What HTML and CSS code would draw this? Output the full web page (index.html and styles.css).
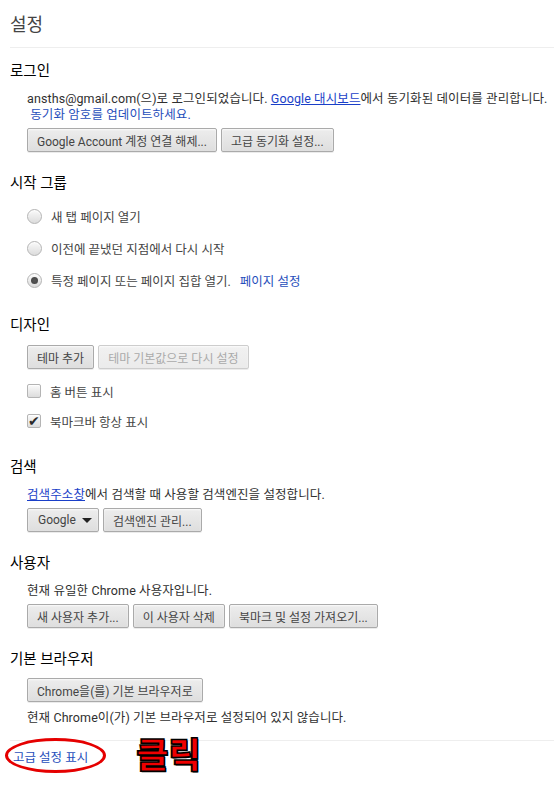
FILE: index.html
```html
<!DOCTYPE html>
<html lang="ko">
<head>
  <meta charset="UTF-8" />
  <title>설정</title>
  <link rel="stylesheet" href="styles.css">
</head>
<body>
  <div class="page">
    <h1 class="page-title">설정</h1>

    <section class="group login">
      <h3>로그인</h3>
      <div class="body">
        <p class="text">ansths@gmail.com(으)로 로그인되었습니다. <a href="#" class="ul">Google 대시보드</a>에서 동기화된 데이터를 관리합니다.<br>
          &nbsp;<a href="#">동기화 암호를 업데이트하세요.</a></p>
        <div class="btns">
          <button>Google Account 계정 연결 해제...</button>
          <button>고급 동기화 설정...</button>
        </div>
      </div>
    </section>

    <section class="group">
      <h3>시작 그룹</h3>
      <div class="body">
        <label class="opt radio-row"><input type="radio" name="start"> 새 탭 페이지 열기</label>
        <label class="opt radio-row"><input type="radio" name="start"> 이전에 끝냈던 지점에서 다시 시작</label>
        <label class="opt radio-row"><input type="radio" name="start" checked> 특정 페이지 또는 페이지 집합 열기. <a href="#">페이지 설정</a></label>
      </div>
    </section>

    <section class="group design">
      <h3>디자인</h3>
      <div class="body">
        <div class="btns top">
          <button>테마 추가</button>
          <button disabled>테마 기본값으로 다시 설정</button>
        </div>
        <label class="opt check-row first"><input type="checkbox"> 홈 버튼 표시</label>
        <label class="opt check-row"><input type="checkbox" checked> 북마크바 항상 표시</label>
      </div>
    </section>

    <section class="group">
      <h3>검색</h3>
      <div class="body">
        <p class="text"><a href="#" class="ul">검색주소창</a>에서 검색할 때 사용할 검색엔진을 설정합니다.</p>
        <div class="btns">
          <button class="select">Google <span class="caret"></span></button>
          <button>검색엔진 관리...</button>
        </div>
      </div>
    </section>

    <section class="group">
      <h3>사용자</h3>
      <div class="body">
        <p class="text">현재 유일한 Chrome 사용자입니다.</p>
        <div class="btns">
          <button>새 사용자 추가...</button>
          <button>이 사용자 삭제</button>
          <button>북마크 및 설정 가져오기...</button>
        </div>
      </div>
    </section>

    <section class="group">
      <h3>기본 브라우저</h3>
      <div class="body">
        <div class="btns first">
          <button>Chrome을(를) 기본 브라우저로</button>
        </div>
        <p class="text note">현재 Chrome이(가) 기본 브라우저로 설정되어 있지 않습니다.</p>
      </div>
    </section>

    <div class="footer">
      <span class="circled"><a href="#">고급 설정 표시</a></span>
      <span class="callout">클릭</span>
    </div>
  </div>
</body>
</html>
```

FILE: styles.css
```css
body {
  margin: 0;
  background: #fff;
  font-family: Roboto, "Noto Sans CJK KR", sans-serif;
  font-size: 12.5px;
  color: #303030;
}
a {
  color: #1f4ebb;
  text-decoration: none;
}
a.ul {
  color: #1a3fc8;
  text-decoration: underline;
}
.page {
  padding: 0 0 0 10px;
}
.page-title {
  margin: 0;
  padding-top: 11px;
  height: 36px;
  font-size: 18px;
  font-weight: normal;
  color: #444;
  line-height: 28px;
  border-bottom: 1px solid #eee;
}
.group {
  margin-top: 22px;
}
.group.login {
  margin-top: 14px;
}
.group h3 {
  margin: 0;
  font-size: 14.5px;
  font-weight: normal;
  color: #000;
  line-height: 20px;
}
.body {
  padding-left: 17px;
}
.text {
  margin: 9px 0 0;
  line-height: 16px;
  letter-spacing: 0.1px;
}
.btns {
  display: flex;
  gap: 4px;
  margin-top: 5px;
}
.btns.top {
  margin-top: 9px;
}
.btns.first {
  margin-top: 8px;
}
button {
  font-family: inherit;
  font-size: 12px;
  color: #444;
  height: 24px;
  padding: 0 9px;
  border: 1px solid #aaa;
  border-radius: 2px;
  background: linear-gradient(#ededed, #dedede);
  box-shadow: 0 1px 0 rgba(0,0,0,0.08), inset 0 1px 2px rgba(255,255,255,0.75);
}
button:disabled {
  color: #aaa;
  border-color: #cdcdcd;
  background: linear-gradient(#f1f1f1, #ebebeb);
}
.select {
  display: flex;
  align-items: center;
  gap: 6px;
  padding: 0 6px 0 10px;
}
.caret {
  width: 0;
  height: 0;
  border-left: 5px solid transparent;
  border-right: 5px solid transparent;
  border-top: 5px solid #222;
}
.opt {
  display: flex;
  align-items: center;
  gap: 9px;
  color: #444;
}
.radio-row {
  height: 32px;
}
.radio-row:first-child {
  margin-top: 6px;
}
.check-row {
  height: 30px;
}
.check-row.first {
  margin-top: 7px;
}
input[type="radio"],
input[type="checkbox"] {
  appearance: none;
  margin: 0;
  flex: none;
  border: 1px solid #b4b4b4;
  background: linear-gradient(#fafafa, #dcdcdc);
  box-shadow: inset 0 1px 1px rgba(255,255,255,0.8);
  position: relative;
}
input[type="radio"] {
  width: 15px;
  height: 15px;
  border-radius: 50%;
}
input[type="radio"]:checked::after {
  content: "";
  position: absolute;
  left: 3px;
  top: 3px;
  width: 7px;
  height: 7px;
  border-radius: 50%;
  background: radial-gradient(#555, #444);
}
input[type="checkbox"] {
  width: 14px;
  height: 14px;
  border-radius: 2px;
}
input[type="checkbox"]:checked::after {
  content: "✔";
  position: absolute;
  left: 0;
  top: -3px;
  font-size: 14px;
  line-height: 18px;
  color: #2a2a2a;
  font-family: "DejaVu Sans", sans-serif;
}
.design {
  margin-top: 20px;
}
.note {
  margin-top: 8px;
}
.footer {
  margin-top: 14px;
  border-top: 1px solid #eee;
  padding: 9px 0 0 3px;
  display: flex;
  align-items: flex-start;
  gap: 48px;
  height: 58px;
}
.circled {
  position: relative;
  line-height: 16px;
}
.circled::before {
  content: "";
  position: absolute;
  left: -8px;
  top: -12px;
  width: 95px;
  height: 29px;
  border: 3px solid #e50000;
  border-radius: 50%;
}
.callout {
  font-family: "Noto Sans CJK KR", sans-serif;
  font-size: 35px;
  font-weight: 900;
  color: #f00000;
  -webkit-text-stroke: 1.5px #000;
  line-height: 30px;
  margin-top: -12px;
  text-shadow: 1px 1px 0 #000;
}
```
